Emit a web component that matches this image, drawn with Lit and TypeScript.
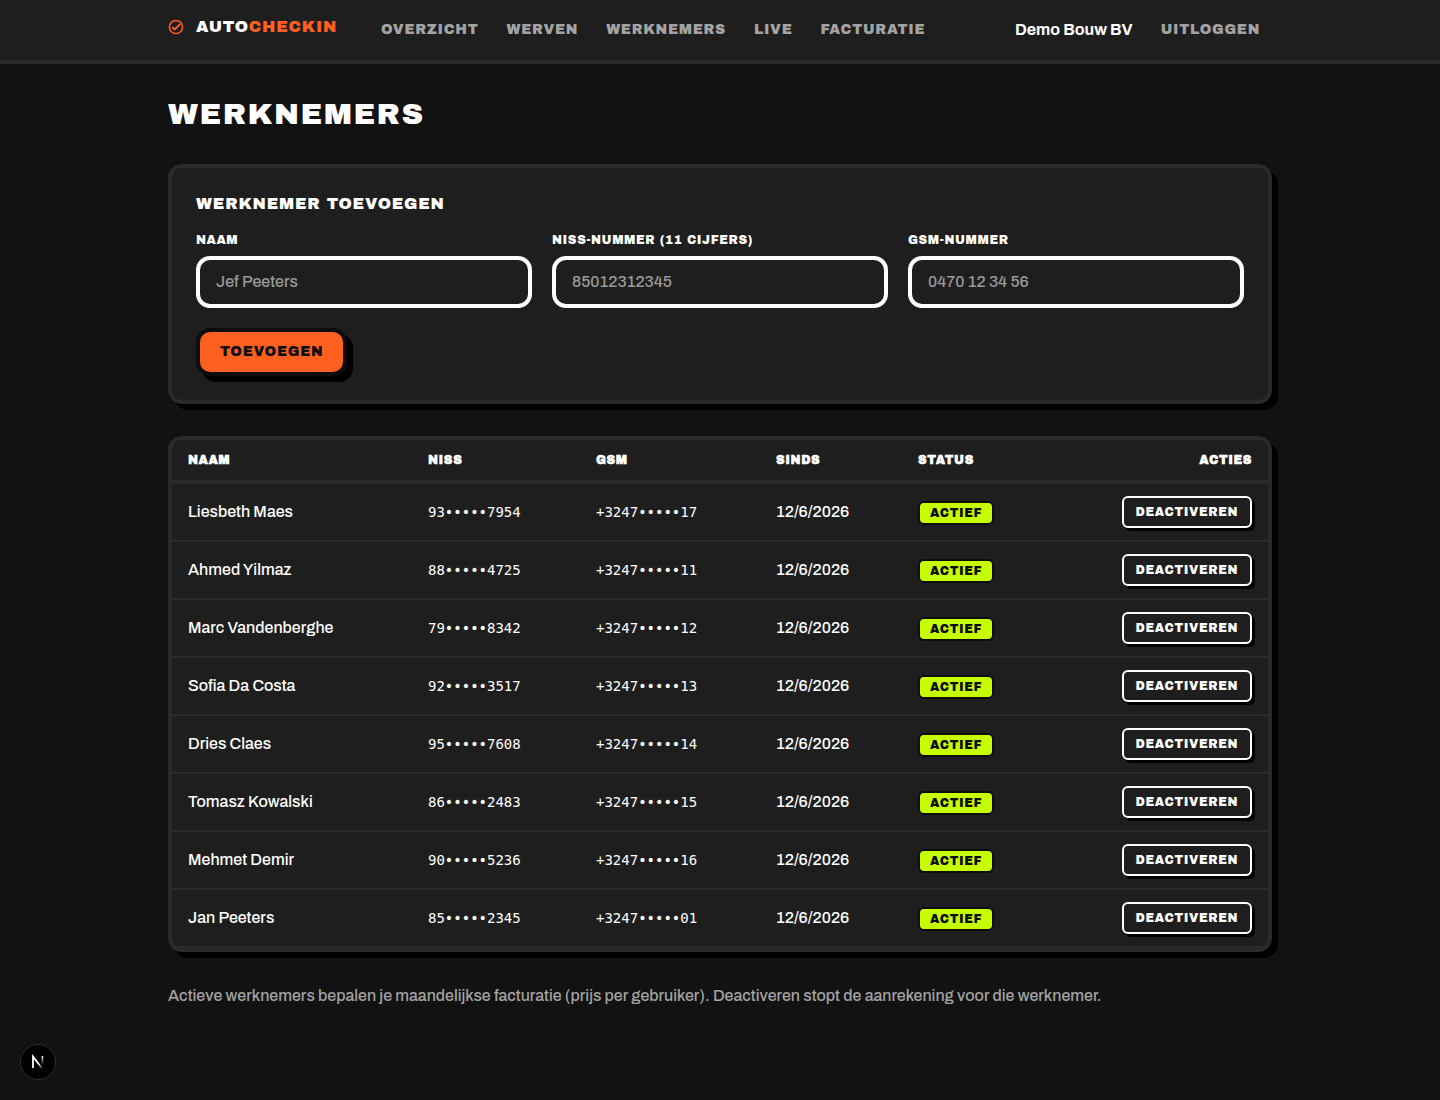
import { LitElement, html, css } from "lit";
import { customElement } from "lit/decorators.js";

interface Worker {
  name: string;
  niss: string;
  gsm: string;
  since: string;
}

const worker = (name: string, nissStart: string, nissEnd: string, gsmEnd: string): Worker => ({
  name,
  niss: `${nissStart}•••••${nissEnd}`,
  gsm: `+3247•••••${gsmEnd}`,
  since: "12/6/2026",
});

const WORKERS: Worker[] = [
  worker("Liesbeth Maes", "93", "7954", "17"),
  worker("Ahmed Yilmaz", "88", "4725", "11"),
  worker("Marc Vandenberghe", "79", "8342", "12"),
  worker("Sofia Da Costa", "92", "3517", "13"),
  worker("Dries Claes", "95", "7608", "14"),
  worker("Tomasz Kowalski", "86", "2483", "15"),
  worker("Mehmet Demir", "90", "5236", "16"),
  worker("Jan Peeters", "85", "2345", "01"),
];

const FIELDS = [
  { id: "naam", label: "Naam", placeholder: "Jef Peeters" },
  { id: "niss", label: "NISS-nummer (11 cijfers)", placeholder: "85012312345" },
  { id: "gsm", label: "GSM-nummer", placeholder: "0470 12 34 56" },
];

const NAV = ["Overzicht", "Werven", "Werknemers", "Live", "Facturatie"];

@customElement("app-root")
export class AppRoot extends LitElement {
  static styles = css`
    :host {
      --bg: #121212;
      --surface: #1e1e1e;
      --line: #2a2a2a;
      --ink: #0d0d0d;
      --muted: #a3a3a3;
      --orange: #ff5f1f;
      --lime: #c6ff00;
      display: block;
      min-height: 100vh;
      background: var(--bg);
      color: #fff;
      font: 500 16px/24px "Archivo", "Liberation Sans", Arial, sans-serif;
    }
    * {
      box-sizing: border-box;
    }
    .display {
      font-family: "Archivo Black", Inter, sans-serif;
      font-weight: 400;
      text-transform: uppercase;
      letter-spacing: 0.05em;
    }
    .wrap {
      max-width: 1152px;
      margin: 0 auto;
      padding: 0 24px;
    }
    header {
      background: var(--surface);
      border-bottom: 4px solid var(--line);
    }
    .bar {
      display: flex;
      align-items: center;
      height: 60px;
    }
    a {
      color: inherit;
      text-decoration: none;
    }
    .brand {
      display: flex;
      align-items: center;
      gap: 12px;
      margin-right: 32px;
      padding-bottom: 6px;
      font-size: 16px;
    }
    .brand svg {
      display: block;
      color: var(--orange);
    }
    .accent {
      color: var(--orange);
    }
    nav {
      display: flex;
      gap: 4px;
    }
    .link {
      padding: 8px 12px;
      border: 0;
      background: none;
      color: var(--muted);
      font-size: 14px;
      line-height: 20px;
      cursor: pointer;
    }
    .account {
      display: flex;
      align-items: center;
      gap: 16px;
      margin-left: auto;
    }
    .company {
      font-weight: 700;
    }
    .page {
      padding-top: 32px;
      padding-bottom: 32px;
    }
    h1 {
      margin: 0 0 32px;
      font-size: 30px;
      line-height: 36px;
    }
    .card {
      border: 4px solid var(--line);
      border-radius: 14px;
      background: var(--surface);
      box-shadow: 6px 6px 0 #000;
      margin-bottom: 32px;
    }
    .form {
      padding: 24px;
    }
    h2 {
      margin: 0 0 16px;
      font-size: 16px;
      line-height: 24px;
    }
    .fields {
      display: grid;
      grid-template-columns: repeat(3, 1fr);
      gap: 20px;
      margin-bottom: 20px;
    }
    label {
      display: block;
      margin-bottom: 8px;
      font-size: 12px;
      line-height: 16px;
    }
    input {
      display: block;
      width: 100%;
      height: 52px;
      padding: 0 16px 2px;
      border: 4px solid #fff;
      border-radius: 14px;
      background: var(--surface);
      color: #fff;
      font: inherit;
    }
    input::placeholder {
      color: #999;
      opacity: 1;
    }
    .submit {
      display: block;
      height: 48px;
      padding: 0 20px 2px;
      border: 4px solid var(--ink);
      border-radius: 14px;
      background: var(--orange);
      color: var(--ink);
      box-shadow: 6px 6px 0 #000;
      font-size: 14px;
      cursor: pointer;
    }
    table {
      width: 100%;
      border-collapse: separate;
      border-spacing: 0;
      table-layout: fixed;
      text-align: left;
    }
    .col-name {
      width: 240px;
    }
    .col-niss {
      width: 168px;
    }
    .col-gsm {
      width: 180px;
    }
    .col-since {
      width: 142px;
    }
    th.display {
      padding: 12px 16px;
      border-bottom: 4px solid var(--line);
      font-size: 12px;
      font-weight: 700;
      line-height: 16px;
    }
    td {
      padding: 12px 16px;
      border-bottom: 2px solid var(--line);
    }
    .mono {
      font-family: "DejaVu Sans Mono", monospace;
      font-size: 14px;
    }
    .end {
      text-align: right;
    }
    .badge {
      display: inline-block;
      padding: 0 10px;
      border: 2px solid var(--ink);
      border-radius: 6px;
      background: var(--lime);
      color: var(--ink);
      font-size: 12px;
      line-height: 20px;
    }
    .toggle {
      display: block;
      height: 32px;
      margin-left: auto;
      padding: 0 12px;
      border: 2px solid #fff;
      border-radius: 6px;
      background: var(--surface);
      color: #fff;
      box-shadow: 3px 3px 0 #000;
      font-size: 12px;
      cursor: pointer;
    }
    .note {
      margin: 0;
      color: var(--muted);
    }
    .dev {
      position: fixed;
      left: 20px;
      bottom: 20px;
      width: 36px;
      height: 36px;
      padding: 0;
      border: 1px solid #2e2e2e;
      border-radius: 50%;
      background: #000;
      cursor: pointer;
    }
    .dev svg {
      display: block;
      margin: auto;
    }
  `;

  render() {
    return html`
      <header>
        <div class="wrap bar">
          <a class="brand display" href="#">
            <svg width="16" height="16" viewBox="0 0 16 16" fill="none" stroke="currentColor" stroke-width="1.5" aria-hidden="true">
              <circle cx="8" cy="8" r="6.6" />
              <path d="M4.2 8l2.5 2.4 5.6-5.6" stroke-width="1.9" />
            </svg>
            <span>Auto<span class="accent">Checkin</span></span>
          </a>
          <nav>${NAV.map((n) => html`<a class="link display" href="#">${n}</a>`)}</nav>
          <div class="account">
            <span class="company">Demo Bouw BV</span>
            <button class="link display" type="button">Uitloggen</button>
          </div>
        </div>
      </header>
      <main class="wrap page">
        <h1 class="display">Werknemers</h1>
        <form class="card form" @submit=${(e: Event) => e.preventDefault()}>
          <h2 class="display">Werknemer toevoegen</h2>
          <div class="fields">
            ${FIELDS.map(
              (f) => html`<div>
                <label class="display" for=${f.id}>${f.label}</label>
                <input id=${f.id} type="text" placeholder=${f.placeholder} />
              </div>`
            )}
          </div>
          <button class="submit display" type="submit">Toevoegen</button>
        </form>
        <section class="card">
          <table>
            <colgroup>
              <col class="col-name" />
              <col class="col-niss" />
              <col class="col-gsm" />
              <col class="col-since" />
              <col />
              <col />
            </colgroup>
            <thead>
              <tr>
                <th class="display">Naam</th>
                <th class="display">NISS</th>
                <th class="display">GSM</th>
                <th class="display">Sinds</th>
                <th class="display">Status</th>
                <th class="display end">Acties</th>
              </tr>
            </thead>
            <tbody>
              ${WORKERS.map(
                (w) => html`<tr>
                  <td>${w.name}</td>
                  <td class="mono">${w.niss}</td>
                  <td class="mono">${w.gsm}</td>
                  <td>${w.since}</td>
                  <td><span class="badge display">Actief</span></td>
                  <td><button class="toggle display" type="button">Deactiveren</button></td>
                </tr>`
              )}
            </tbody>
          </table>
        </section>
        <p class="note">
          Actieve werknemers bepalen je maandelijkse facturatie (prijs per gebruiker). Deactiveren stopt de aanrekening
          voor die werknemer.
        </p>
      </main>
      <button class="dev" type="button" aria-label="Next.js">
        <svg width="16" height="16" viewBox="0 0 16 16" fill="none" aria-hidden="true">
          <defs>
            <linearGradient id="stem" x1="0" y1="2" x2="0" y2="11" gradientUnits="userSpaceOnUse">
              <stop stop-color="#fff" />
              <stop offset="1" stop-color="#fff" stop-opacity="0" />
            </linearGradient>
            <linearGradient id="diag" x1="9" y1="9" x2="13" y2="15" gradientUnits="userSpaceOnUse">
              <stop stop-color="#fff" />
              <stop offset="1" stop-color="#fff" stop-opacity="0" />
            </linearGradient>
          </defs>
          <path d="M3 14V2.6l9.6 12.4" stroke="url(#diag)" stroke-width="1.8" />
          <path d="M12.4 2v9" stroke="url(#stem)" stroke-width="1.6" />
        </svg>
      </button>
    `;
  }
}
